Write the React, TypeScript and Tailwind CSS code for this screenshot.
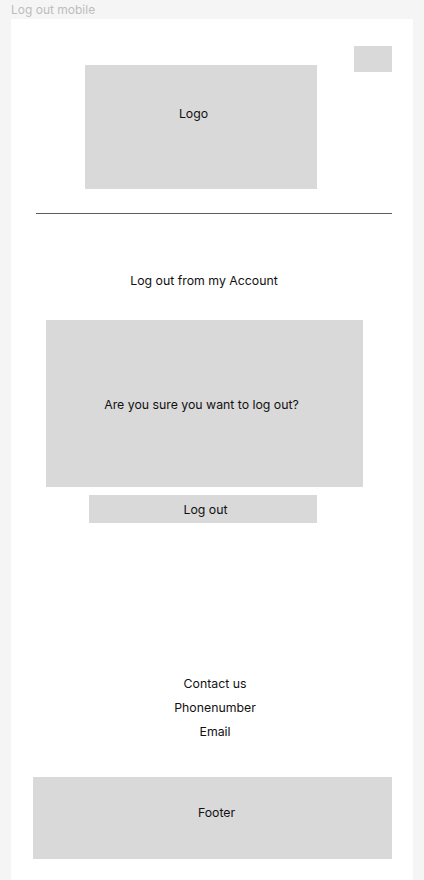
const font = { fontFamily: "Inter, 'Liberation Sans', sans-serif" };

export default function App() {
  return (
    <div className="min-h-[880px] bg-[#f5f5f5] text-[#111]" style={font}>
      <div className="h-[19px] pl-[11px] pt-[3px] text-[12px] leading-[14px] text-[#bdbdbd]">
        Log out mobile
      </div>

      <div className="ml-[11px] h-[861px] w-[402px] bg-white text-[12.3px]">
        {/* header */}
        <div className="flex items-start">
          <div className="ml-[74px] mt-[46px] h-[124px] w-[232px] bg-[#d9d9d9] pr-[15px] pt-[41px] text-center leading-[16px]">
            Logo
          </div>
          <div className="ml-[37px] mt-[27px] h-[26px] w-[38px] bg-[#d9d9d9]" />
        </div>

        <div className="ml-[25px] mt-[24px] h-px w-[356px] bg-[#5c5c5c]" />

        <main>
          <h1 className="ml-[15px] mt-[59px] w-[356px] text-center leading-[16px]">
            Log out from my Account
          </h1>

          <div className="ml-[35px] mt-[31px] flex h-[167px] w-[317px] items-center justify-center bg-[#d9d9d9] pr-[6px] pt-[2px] leading-[16px]">
            Are you sure you want to log out?
          </div>

          <button className="ml-[78px] mt-[8px] block h-[28px] w-[228px] bg-[#d9d9d9] pl-[5px] pt-px text-center leading-[16px]">
            Log out
          </button>
        </main>

        <div className="mt-[149px] ml-[6px] flex flex-col items-center leading-[24px]">
          <span>Contact us</span>
          <span>Phonenumber</span>
          <span>Email</span>
        </div>

        <footer className="ml-[22px] mt-[33px] h-[82px] w-[359px] bg-[#d9d9d9] pl-[8px] pt-[28px] text-center leading-[16px]">
          Footer
        </footer>
      </div>
    </div>
  );
}
